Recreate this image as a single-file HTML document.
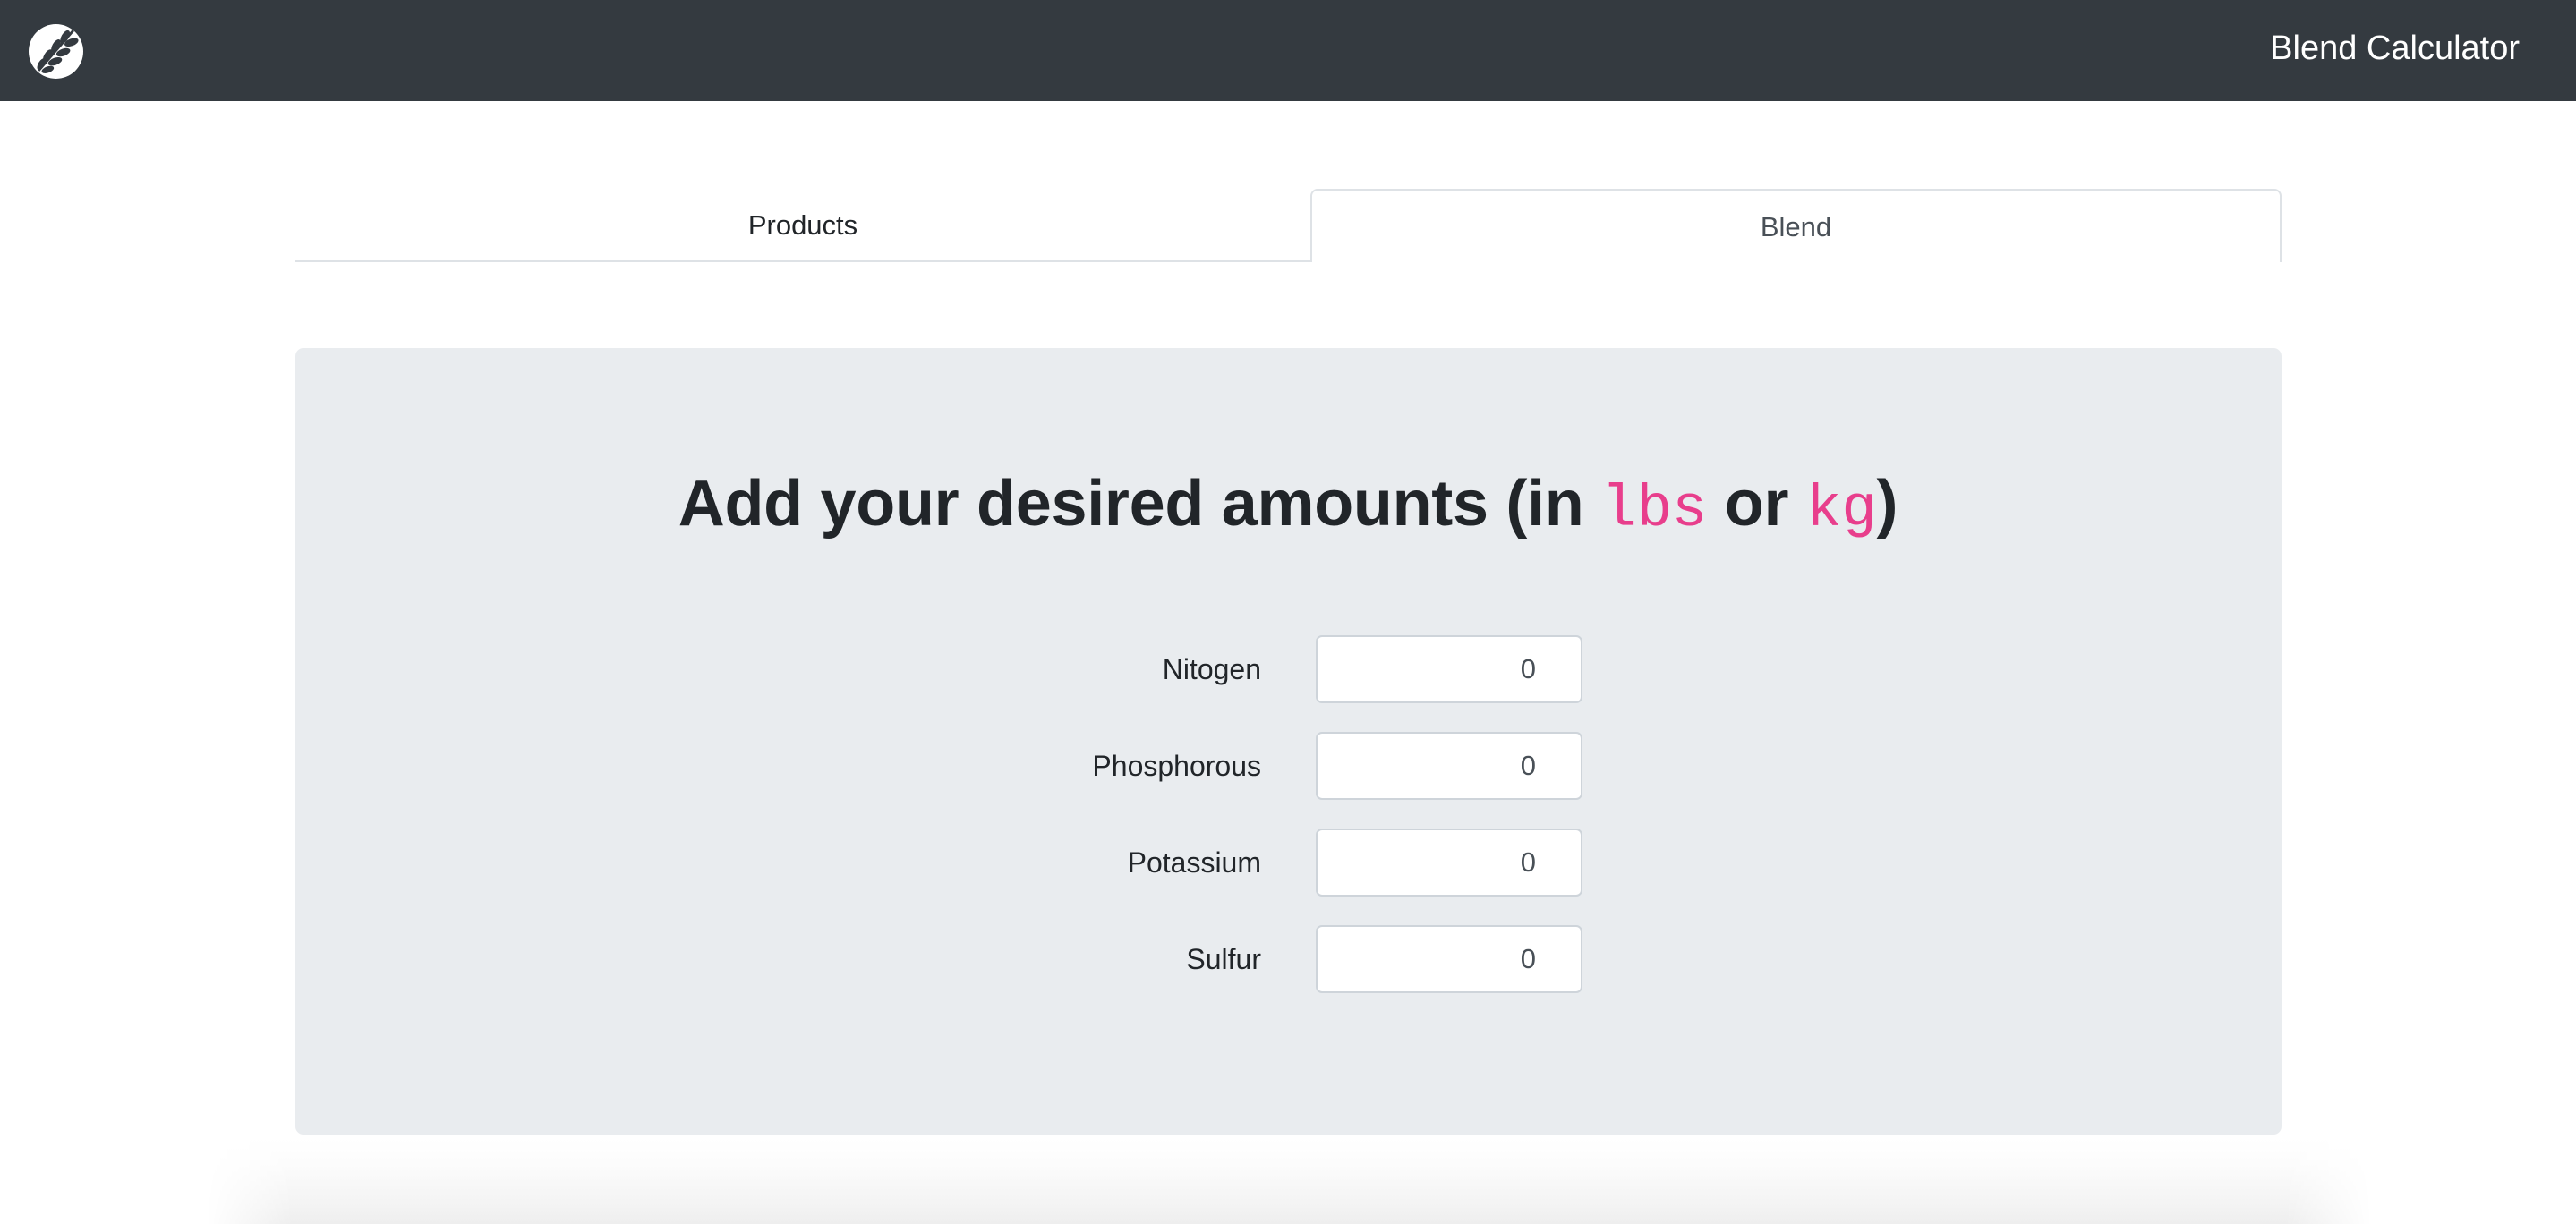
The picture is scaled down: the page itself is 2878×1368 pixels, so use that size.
<!DOCTYPE html>
<html><head><meta charset="utf-8"><style>
*{box-sizing:border-box;margin:0;padding:0}
html{width:2878px;height:1368px;overflow:hidden}
body{width:2878px;height:1368px;overflow:hidden;background:#fff;font-family:"Liberation Sans",sans-serif;color:#212529;position:relative}
.hdr{position:absolute;left:0;top:0;width:2878px;height:113px;background:#343a40}
.hdr .t{position:absolute;right:63px;top:33px;font-size:38px;color:#fff}
.tab{position:absolute;top:211px;height:82px;font-size:31px;text-align:center;line-height:82px}
.t1{left:330px;width:1134px;border-bottom:2px solid #dee2e6}
.t2{left:1464px;width:1085px;border:2px solid #dee2e6;border-bottom:none;border-radius:8px 8px 0 0;color:#495057}
.jum{position:absolute;left:330px;top:389px;width:2219px;height:879px;background:#e9ecef;border-radius:9px}
h1{position:absolute;left:0;width:100%;top:522px;text-align:center;font-size:72px;font-weight:bold;letter-spacing:-0.3px}
code{font-family:"Liberation Mono",monospace;color:#e83e8c;font-size:66px;font-weight:normal}
.row{position:absolute;left:0;width:2878px;height:76px}
.row .l{position:absolute;right:1469px;top:0;line-height:76px;font-size:32px}
.row .i{position:absolute;left:1470px;top:0;width:298px;height:76px;background:#fff;border:2px solid #ced4da;border-radius:7px;text-align:right;padding-right:50px;line-height:72px;font-size:31px;color:#495057}
.sh{position:absolute;left:230px;top:1272px;width:2420px;height:96px;background:linear-gradient(#fff,#fcfcfc 30%,#f3f3f3 80%,#eeeeee);-webkit-mask-image:linear-gradient(to right,transparent,#000 4%,#000 96%,transparent);mask-image:linear-gradient(to right,transparent,#000 4%,#000 96%,transparent)}
</style></head><body>
<div class="hdr">
<svg style="position:absolute;left:32px;top:27px" width="61" height="61" viewBox="0 0 60 60">
<circle cx="30" cy="30" r="30" fill="#fff"/>
<g fill="#343a40">
<path d="M50 8 L12 52 L10 50 L48 6Z"/>
<ellipse cx="40" cy="14" rx="4" ry="8" transform="rotate(30 40 14)"/>
<ellipse cx="47" cy="20" rx="4" ry="8" transform="rotate(70 47 20)"/>
<ellipse cx="30" cy="24" rx="4" ry="8" transform="rotate(30 30 24)"/>
<ellipse cx="38" cy="31" rx="4" ry="8" transform="rotate(70 38 31)"/>
<ellipse cx="21" cy="35" rx="4" ry="8" transform="rotate(30 21 35)"/>
<ellipse cx="29" cy="41" rx="4" ry="8" transform="rotate(70 29 41)"/>
<ellipse cx="14" cy="44" rx="3.5" ry="7" transform="rotate(30 14 44)"/>
<ellipse cx="21" cy="50" rx="3.5" ry="7" transform="rotate(70 21 50)"/>
</g></svg>
<div class="t">Blend Calculator</div></div>
<div class="tab t1">Products</div>
<div class="tab t2">Blend</div>
<div class="jum"></div>
<h1>Add your desired amounts (in <code>lbs</code> or <code>kg</code>)</h1>
<div class="row" style="top:710px"><div class="l">Nitogen</div><div class="i">0</div></div>
<div class="row" style="top:818px"><div class="l">Phosphorous</div><div class="i">0</div></div>
<div class="row" style="top:926px"><div class="l">Potassium</div><div class="i">0</div></div>
<div class="row" style="top:1034px"><div class="l">Sulfur</div><div class="i">0</div></div>
<div class="sh"></div>
</body></html>
